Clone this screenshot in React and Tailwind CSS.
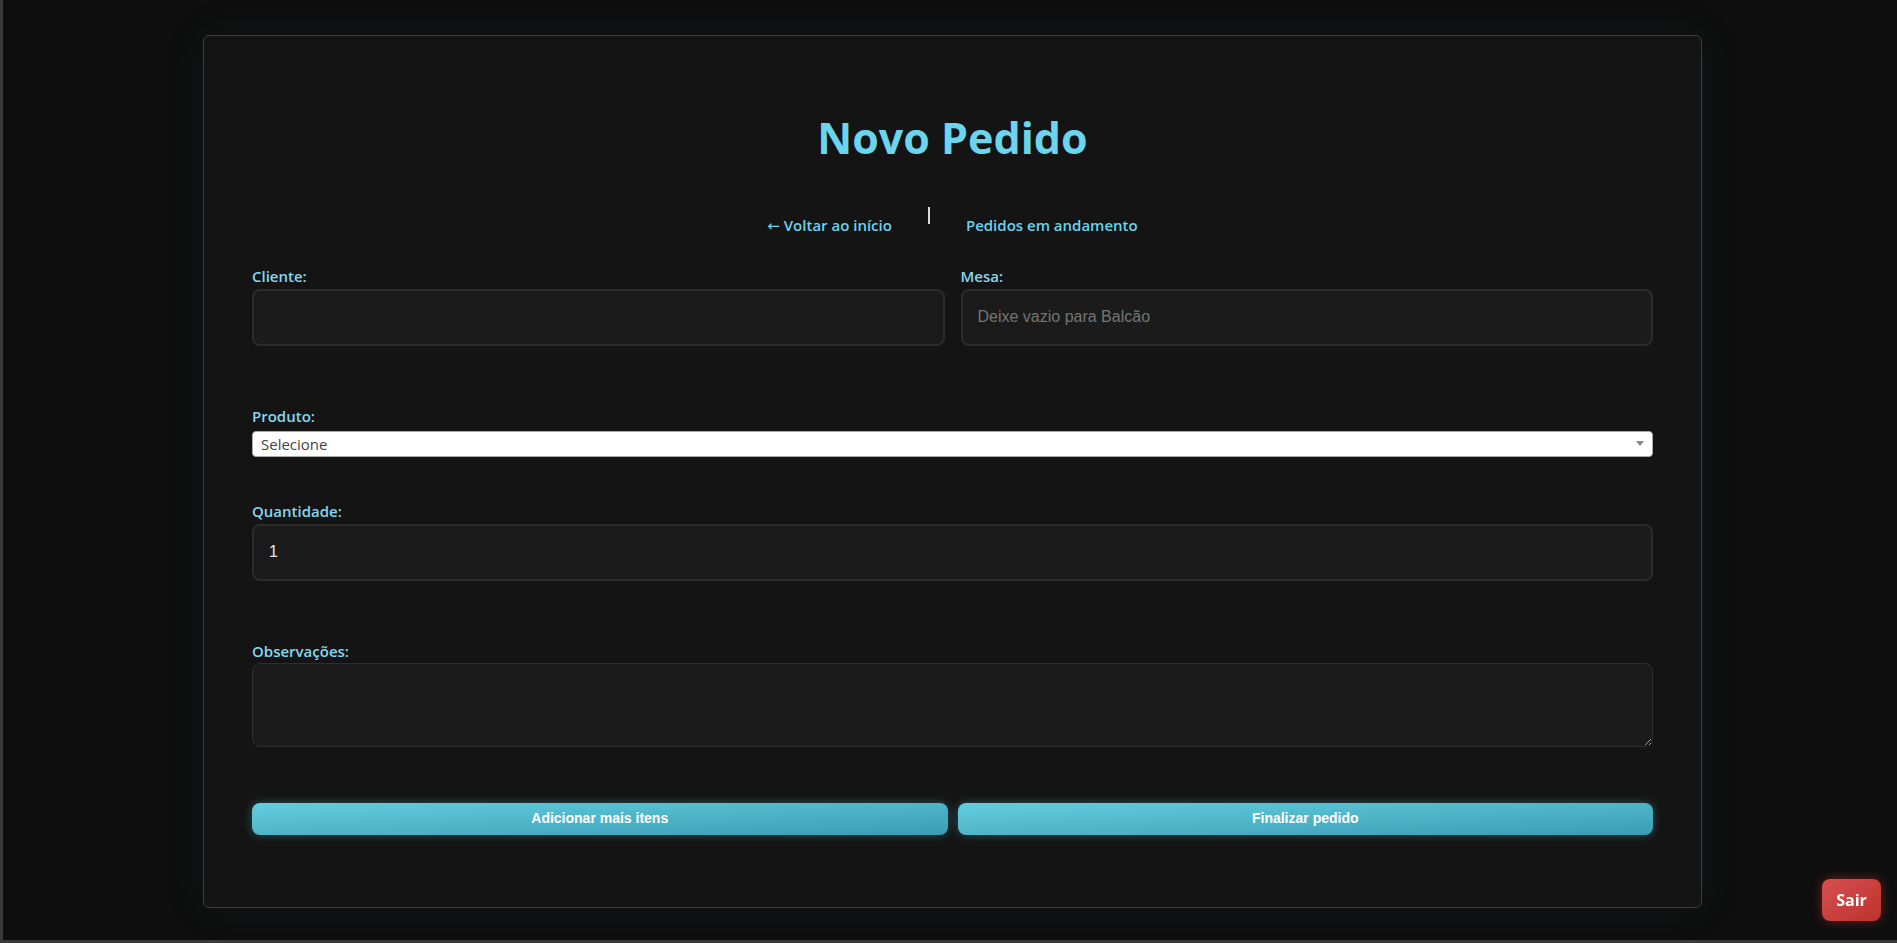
export default function App() {
  return (
    <div className="flex h-[943px] w-full items-center justify-center border-b-[3px] border-l-[3px] border-[#3a3a3a] bg-[#0e0e0e] pl-[5px] pt-[2px] font-['Open_Sans',sans-serif]">
      <div className="w-[1499px] rounded-[6px] border border-[#2b4447] bg-[#141414] px-[48px] pb-[72px] pt-[80px] shadow-[0_0_40px_rgba(50,110,120,0.1)]">
        <h1 className="text-center text-[43px] font-bold leading-none text-[#6ad5ec]">Novo Pedido</h1>

        <nav className="mt-[48px] flex items-start justify-center gap-[36px] text-[15px] font-semibold leading-[20px] text-[#6ad3ec]">
          <a href="#inicio" className="mt-[8px]">
            <span className="font-['DejaVu_Sans',sans-serif] font-normal">←</span> Voltar ao início
          </a>
          <span className="h-[17px] w-[2px] bg-[#dcdcdc]" />
          <a href="#andamento" className="mt-[8px]">Pedidos em andamento</a>
        </nav>

        <div className="mt-[30px] grid grid-cols-2 gap-4">
          <div>
            <label className="mb-[3px] block text-[15px] font-semibold leading-[20px] text-[#86d7ef]">Cliente:</label>
            <input
              type="text"
              className="h-[57px] w-full rounded-[8px] border-2 border-[#2c2c2c] bg-[#1b1b1b] px-[15px] font-['Liberation_Sans',sans-serif] text-[16px] text-[#e0e0e0] outline-none"
            />
          </div>
          <div>
            <label className="mb-[3px] block text-[15px] font-semibold leading-[20px] text-[#86d7ef]">Mesa:</label>
            <input
              type="text"
              placeholder="Deixe vazio para Balcão"
              className="h-[57px] w-full rounded-[8px] border-2 border-[#2c2c2c] bg-[#1b1b1b] px-[15px] font-['Liberation_Sans',sans-serif] text-[16px] text-[#e0e0e0] outline-none placeholder:text-[#757575]"
            />
          </div>
        </div>

        <div className="mt-[60px]">
          <label className="mb-[5px] block text-[15px] font-semibold leading-[20px] text-[#86d7ef]">Produto:</label>
          <div className="flex h-[26px] items-center justify-between rounded-[4px] border border-[#aaaaaa] bg-white pl-[8px] pr-[8px]">
            <span className="text-[15px] leading-[20px] text-[#444444]">Selecione</span>
            <span className="h-0 w-0 border-x-[4px] border-t-[5px] border-x-transparent border-t-[#888888]" />
          </div>
        </div>

        <div className="mt-[44px]">
          <label className="mb-[3px] block text-[15px] font-semibold leading-[20px] text-[#86d7ef]">Quantidade:</label>
          <input
            type="text"
            defaultValue="1"
            className="h-[57px] w-full rounded-[8px] border-2 border-[#2c2c2c] bg-[#1b1b1b] px-[15px] font-['Liberation_Sans',sans-serif] text-[16px] text-[#e6e6e6] outline-none"
          />
        </div>

        <div className="mt-[60px]">
          <label className="mb-[2px] block text-[15px] font-semibold leading-[20px] text-[#86d7ef]">Observações:</label>
          <textarea className="block h-[84px] w-full rounded-[8px] border border-[#2e2e2e] bg-[#1b1b1b] p-[12px] font-['Liberation_Sans',sans-serif] text-[16px] text-[#e0e0e0] outline-none" />
        </div>

        <div className="mt-[56px] grid grid-cols-2 gap-[10px]">
          <button className="h-[32px] rounded-[8px] bg-gradient-to-br from-[#63cee0] to-[#3a9db3] font-['Liberation_Sans',sans-serif] text-[14px] font-bold text-white shadow-[0_0_10px_rgba(90,200,220,0.35)]">
            Adicionar mais itens
          </button>
          <button className="h-[32px] rounded-[8px] bg-gradient-to-br from-[#63cee0] to-[#3a9db3] font-['Liberation_Sans',sans-serif] text-[14px] font-bold text-white shadow-[0_0_10px_rgba(90,200,220,0.35)]">
            Finalizar pedido
          </button>
        </div>
      </div>

      <button className="fixed bottom-[22px] right-[16px] h-[42px] w-[59px] rounded-[8px] bg-gradient-to-br from-[#d65050] to-[#be302b] text-[16px] font-bold text-white shadow-[0_0_12px_rgba(220,60,60,0.45)]">
        Sair
      </button>
    </div>
  );
}
